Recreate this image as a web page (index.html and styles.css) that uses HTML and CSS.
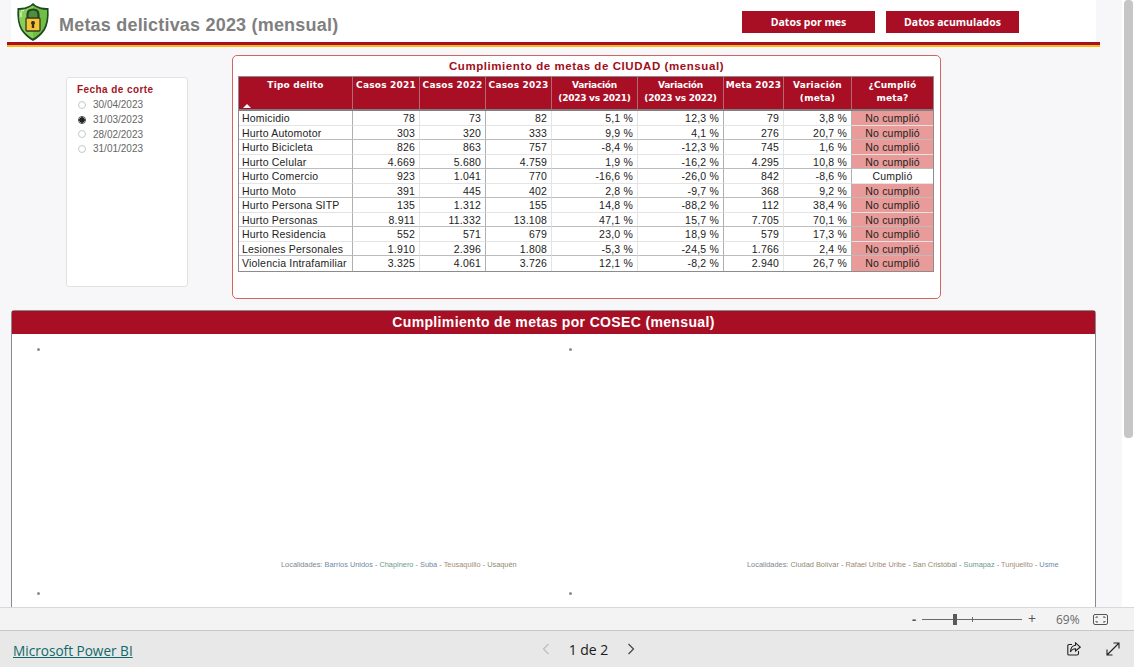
FILE: index.html
```html
<!DOCTYPE html>
<html lang="es">
<head>
<meta charset="utf-8">
<title>Metas delictivas 2023 (mensual)</title>
<link rel="stylesheet" href="styles.css">
</head>
<body>
<div class="app">
  <div class="viewport">
    <main class="canvas">
      <header class="head">
        <svg class="logo" width="34" height="40" viewBox="0 0 34 40">
          <path d="M17 1 L20 3.500 Q26 6.500 32.500 6 Q33.500 20 29 28 Q24.500 35 17 39 Q9.500 35 5 28 Q.5 20 1.500 6 Q8 6.500 14 3.500 Z" fill="#1f4a24"/>
          <path d="M17 3.500 Q24 8 31 8 Q31.500 20 27.500 27 Q23.500 33 17 36.500 Q10.500 33 6.500 27 Q2.500 20 3 8 Q10 8 17 3.500 Z" fill="#6fbf44"/>
          <path d="M17 3.500 Q10 8 3 8 Q2.500 20 6.500 27 Q10.500 33 17 36.500 Z" fill="#86cf58"/>
          <path d="M5 10 V15 M5 9 L8 8.500" stroke="#e6f7d8" stroke-width="1.200" fill="none"/>
          <path d="M11.500 16 V12.500 Q11.500 7.500 17 7.500 Q22.500 7.500 22.500 12.500 V16" stroke="#28442a" stroke-width="2.200" fill="#4d8f3c"/>
          <rect x="10" y="16" width="14" height="13" rx="1" fill="#f4c534" stroke="#3a3a22" stroke-width="1.300"/>
          <path d="M17 19 a2 2 0 0 1 1.200 3.600 V26 H15.800 V22.600 A2 2 0 0 1 17 19 Z" fill="#3a3020"/>
        </svg>
        <h1 class="title">Metas delictivas 2023 (mensual)</h1>
        <nav class="btns">
          <a class="btn">Datos por mes</a>
          <a class="btn">Datos acumulados</a>
        </nav>
      </header>
      <div class="rule"><div class="rule-red"></div><div class="rule-gold"></div></div>

      <section class="top">
        <aside class="slicer">
          <h2 class="slicer-title">Fecha de corte</h2>
          <div class="opt"><span class="radio"></span>30/04/2023</div>
          <div class="opt"><span class="radio on"></span>31/03/2023</div>
          <div class="opt"><span class="radio"></span>28/02/2023</div>
          <div class="opt"><span class="radio"></span>31/01/2023</div>
        </aside>

        <div class="panel">
          <h2 class="panel-title">Cumplimiento de metas de CIUDAD (mensual)</h2>
          <div class="table">
            <div class="row hrow">
              <div class="h first">Tipo delito<svg class="sort" width="8" height="4" viewBox="0 0 8 4"><path d="M0 4 L4 0 L8 4 Z" fill="#fff"/></svg></div>
              <div class="h">Casos 2021</div><div class="h">Casos 2022</div><div class="h">Casos 2023</div>
              <div class="h v">Variación<br>(2023 vs 2021)</div><div class="h v">Variación<br>(2023 vs 2022)</div>
              <div class="h">Meta 2023</div><div class="h">Variación<br>(meta)</div><div class="h">¿Cumplió<br>meta?</div>
            </div>
            <div class="row"><div class="c">Homicidio</div><div class="c n">78</div><div class="c n">73</div><div class="c n">82</div><div class="c n">5,1 %</div><div class="c n">12,3 %</div><div class="c n">79</div><div class="c n">3,8 %</div><div class="c s miss">No cumplió</div></div>
            <div class="row"><div class="c">Hurto Automotor</div><div class="c n">303</div><div class="c n">320</div><div class="c n">333</div><div class="c n">9,9 %</div><div class="c n">4,1 %</div><div class="c n">276</div><div class="c n">20,7 %</div><div class="c s miss">No cumplió</div></div>
            <div class="row"><div class="c">Hurto Bicicleta</div><div class="c n">826</div><div class="c n">863</div><div class="c n">757</div><div class="c n">-8,4 %</div><div class="c n">-12,3 %</div><div class="c n">745</div><div class="c n">1,6 %</div><div class="c s miss">No cumplió</div></div>
            <div class="row"><div class="c">Hurto Celular</div><div class="c n">4.669</div><div class="c n">5.680</div><div class="c n">4.759</div><div class="c n">1,9 %</div><div class="c n">-16,2 %</div><div class="c n">4.295</div><div class="c n">10,8 %</div><div class="c s miss">No cumplió</div></div>
            <div class="row"><div class="c">Hurto Comercio</div><div class="c n">923</div><div class="c n">1.041</div><div class="c n">770</div><div class="c n">-16,6 %</div><div class="c n">-26,0 %</div><div class="c n">842</div><div class="c n">-8,6 %</div><div class="c s">Cumplió</div></div>
            <div class="row"><div class="c">Hurto Moto</div><div class="c n">391</div><div class="c n">445</div><div class="c n">402</div><div class="c n">2,8 %</div><div class="c n">-9,7 %</div><div class="c n">368</div><div class="c n">9,2 %</div><div class="c s miss">No cumplió</div></div>
            <div class="row"><div class="c">Hurto Persona SITP</div><div class="c n">135</div><div class="c n">1.312</div><div class="c n">155</div><div class="c n">14,8 %</div><div class="c n">-88,2 %</div><div class="c n">112</div><div class="c n">38,4 %</div><div class="c s miss">No cumplió</div></div>
            <div class="row"><div class="c">Hurto Personas</div><div class="c n">8.911</div><div class="c n">11.332</div><div class="c n">13.108</div><div class="c n">47,1 %</div><div class="c n">15,7 %</div><div class="c n">7.705</div><div class="c n">70,1 %</div><div class="c s miss">No cumplió</div></div>
            <div class="row"><div class="c">Hurto Residencia</div><div class="c n">552</div><div class="c n">571</div><div class="c n">679</div><div class="c n">23,0 %</div><div class="c n">18,9 %</div><div class="c n">579</div><div class="c n">17,3 %</div><div class="c s miss">No cumplió</div></div>
            <div class="row"><div class="c">Lesiones Personales</div><div class="c n">1.910</div><div class="c n">2.396</div><div class="c n">1.808</div><div class="c n">-5,3 %</div><div class="c n">-24,5 %</div><div class="c n">1.766</div><div class="c n">2,4 %</div><div class="c s miss">No cumplió</div></div>
            <div class="row"><div class="c">Violencia Intrafamiliar</div><div class="c n">3.325</div><div class="c n">4.061</div><div class="c n">3.726</div><div class="c n">12,1 %</div><div class="c n">-8,2 %</div><div class="c n">2.940</div><div class="c n">26,7 %</div><div class="c s miss">No cumplió</div></div>
          </div>
        </div>
      </section>

      <section class="cosec">
        <h2 class="cosec-title">Cumplimiento de metas por COSEC (mensual)</h2>
        <div class="cosec-body">
          <div class="cell">
            <span class="dot"></span>
            <p class="cap cap-a">Localidades: <span class="t1">Barrios Unidos</span> - <span class="t2">Chapinero</span> - <span class="t1">Suba</span> - <span class="t3">Teusaquillo</span> - <span class="t4">Usaquén</span></p>
          </div>
          <div class="cell">
            <span class="dot"></span>
            <p class="cap cap-b">Localidades: <span class="t4">Ciudad Bolívar</span> - <span class="t3">Rafael Uribe Uribe</span> - <span class="t4">San Cristóbal</span> - <span class="t2">Sumapaz</span> - <span class="t3">Tunjuelito</span> - <span class="t1">Usme</span></p>
          </div>
          <div class="cell"><span class="dot"></span></div>
          <div class="cell"><span class="dot"></span></div>
        </div>
      </section>
    </main>
    <div class="scroll"><div class="thumb"></div></div>
  </div>

  <div class="zoombar">
    <span class="zbtn">-</span>
    <div class="slider"><span class="knob"></span><span class="tick"></span></div>
    <span class="zbtn plus">+</span>
    <span class="pct">69%</span>
    <svg class="fit" width="15" height="11" viewBox="0 0 15 11" fill="none" stroke="#555"><rect x=".5" y=".5" width="14" height="10" rx="1.500"/><path d="M3 4 V3 H5 M10 3 H12 V4 M12 7 V8 H10 M5 8 H3 V7"/></svg>
  </div>

  <footer class="foot">
    <a class="brand">Microsoft Power BI</a>
    <div class="pager">
      <svg width="8" height="12" viewBox="0 0 8 12" fill="none" stroke="#bdbdbd" stroke-width="1.200"><path d="M6.500 1 L1.500 6 L6.500 11"/></svg>
      <span class="pages">1 de 2</span>
      <svg width="8" height="12" viewBox="0 0 8 12" fill="none" stroke="#444" stroke-width="1.200"><path d="M1.500 1 L6.500 6 L1.500 11"/></svg>
    </div>
    <div class="tools">
      <svg width="14" height="14" viewBox="0 0 14 14" fill="none" stroke="#222" stroke-width="1.100"><path d="M5 2.500 H2 Q.8 2.500 .8 3.700 V12 Q.8 13 2 13 H10 Q11.500 13 11.500 11.500 V9"/><path d="M8.500 .8 L13.300 5 L8.500 9 V6.800 Q5 6.800 3.500 10 Q3.500 3.800 8.500 3.200 Z"/></svg>
      <svg width="14" height="14" viewBox="0 0 14 14" fill="none" stroke="#222" stroke-width="1.100"><path d="M1 13 L13 1 M7.500 1 H13 V6.500 M1 7.500 V13 H6.500"/></svg>
    </div>
  </footer>
</div>
</body>
</html>
```
FILE: styles.css
```css
* { box-sizing: border-box; }
html, body { margin: 0; height: 100%; overflow: hidden; }
body { font-family: "Liberation Sans", Arial, sans-serif; background: #fff; color: #222; }
h1, h2, p { margin: 0; }

.app { width: 1134px; height: 667px; display: flex; flex-direction: column; }
.viewport { height: 607px; display: flex; overflow: hidden; }
.canvas { width: 1122px; height: 607px; background: #f7f7f9; overflow: hidden; }
.scroll { flex: 1; background: #fff; padding-left: 2px; }
.thumb { width: 9px; height: 438px; background: #c6c6c6; border-radius: 4px; }

.head { margin-left: 11px; width: 1085px; height: 42px; background: #fff; display: flex; align-items: flex-start; }
.logo { margin: 2px 0 0 5px; flex: none; }
.title { margin: 14px 0 0 9px; font-size: 18px; line-height: 22px; letter-spacing: .2px; font-weight: 700; color: #7f7f7f; white-space: nowrap; }
.btns { margin: 11px 0 0 auto; padding-right: 77px; display: flex; gap: 11px; }
.btn { width: 133px; height: 22px; background: #a80f25; color: #fff; font: 700 10.500px/22px "Open Sans", sans-serif; text-align: center; }
.rule { margin-left: 7px; width: 1093px; }
.rule-red { height: 3px; background: #a80f25; }
.rule-gold { height: 2px; background: #f5bb12; }

.top { display: flex; align-items: flex-start; gap: 44px; padding: 8px 0 0 66px; height: 252px; }
.slicer { margin-top: 22px; width: 122px; height: 210px; background: #fff; border: 1px solid #e2e2e2; border-radius: 3px; padding: 6px 0 0 10px; }
.slicer-title { font-size: 10px; line-height: 12px; letter-spacing: .42px; font-weight: 700; color: #a3161f; margin-bottom: 1.500px; }
.opt { display: flex; align-items: center; height: 14.700px; font-size: 10px; color: #666; }
.radio { width: 8px; height: 8px; margin: 0 7px 0 1px; border: 1px solid #c8c8c8; border-radius: 50%; background: #fff; }
.radio.on { border-color: #444; background: radial-gradient(circle, #222 0 2.500px, #fff 3px); }

.panel { width: 709px; height: 244px; background: #fff; border: 1px solid #d0665f; border-radius: 5px; padding: 0 6px 0 5px; }
.panel-title { height: 20px; font-size: 11.500px; line-height: 20px; letter-spacing: .57px; font-weight: 700; color: #a00f20; text-align: center; padding-left: 1px; }

.table { width: 696px; border: 1px solid #8c8c8c; background: #fff; }
.row { display: grid; grid-template-columns: 114px 67px 66px 66px 86px 86px 60px 68px 81px; height: 14.500px; font-size: 10.500px; line-height: 14px; letter-spacing: .2px; color: #222; }
.row:nth-child(even) .c { border-bottom: 1px solid #e4e4e4; }
.row:nth-child(odd) .c { border-bottom: 1px solid #bcbcbc; }
.row:last-child .c { border-bottom: 0; }
.c { overflow: hidden; white-space: nowrap; padding-left: 3px; border-right: 1px solid #e4e4e4; }
.c:nth-child(1), .c:nth-child(3), .c:nth-child(6), .c:nth-child(8) { border-right-color: #b0b0b0; }
.c:last-child { border-right: 0; }
.n { text-align: right; padding: 0 4px 0 0; }
.s { text-align: center; padding: 0; }
.miss { background: #e89b98; }
.hrow { height: 34px; background: #a80f25; border-bottom: 2px solid #808080; }
.h { position: relative; border-right: 1px solid #b06a74; color: #fff; font: 700 9px/13px "DejaVu Sans", sans-serif; text-align: center; white-space: nowrap; padding-top: 2px; }
.h.v { letter-spacing: -.25px; }
.h:last-child { border-right: 0; }
.sort { position: absolute; left: 4px; bottom: 1px; }

.cosec { margin: 11px 0 0 11px; width: 1085px; height: 320px; background: #fff; border: 1px solid #8a8a8a; border-radius: 3px 3px 0 0; }
.cosec-title { height: 23px; background: #a80f25; color: #fff; font-size: 14px; line-height: 23px; letter-spacing: .35px; font-weight: 700; text-align: center; }
.cosec-body { display: grid; grid-template-columns: 532px 1fr; grid-template-rows: 244px 60px; }
.cell { padding: 14px 0 0 25px; }
.dot { display: block; width: 3px; height: 3px; background: #8c8c8c; border-radius: 50%; }
.cap { font-size: 7.380px; line-height: 10px; color: #7d8790; white-space: nowrap; margin-top: 209px; }
.cap-a { margin-left: 244px; }
.cap-b { margin-left: 178px; }
.t1 { color: #6f8aa5; }
.t2 { color: #6d9a8e; }
.t3 { color: #a58a78; }
.t4 { color: #8f8a70; }

.zoombar { height: 24px; background: #f3f3f3; border-top: 1px solid #d8d8d8; border-bottom: 1px solid #c8c8c8; display: flex; align-items: center; padding-left: 912px; color: #555; }
.zbtn { width: 7px; font: 700 13px/14px "Open Sans", sans-serif; color: #555; }
.slider { position: relative; margin-left: 3px; width: 100px; height: 1px; background: #6a6a6a; }
.knob { position: absolute; left: 31px; top: -5px; width: 4px; height: 11px; background: #5a5a5a; }
.tick { position: absolute; left: 50px; top: -2px; width: 1px; height: 5px; background: #6a6a6a; }
.plus { margin-left: 6px; font-weight: 400; font-size: 14px; }
.pct { margin-left: 21px; width: 36px; font: 12px "Open Sans", sans-serif; color: #6a6a6a; }
.fit { margin-left: 1px; }

.foot { flex: 1; background: #e8e8e8; display: flex; align-items: center; position: relative; padding: 2px 14px 0 13px; }
.brand { font: 13.600px "Open Sans", sans-serif; color: #106a6a; text-decoration: underline; }
.pager { position: absolute; left: 542px; top: 0; height: 100%; display: flex; align-items: center; }
.pages { width: 77px; text-align: center; font: 500 14px "Open Sans", sans-serif; color: #1a1a1a; }
.tools { margin-left: auto; display: flex; gap: 25px; margin-top: -2px; }
```
